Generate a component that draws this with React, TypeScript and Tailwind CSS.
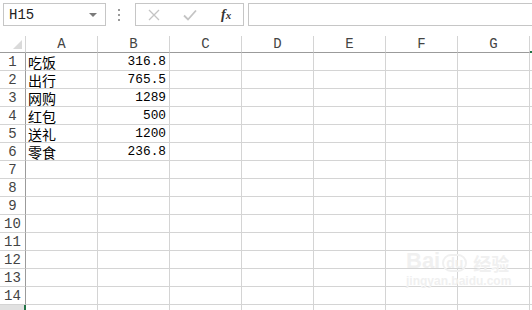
import React from "react";

// 表格数据：第 1-6 行
const DATA: [string, string][] = [
  ["吃饭", "316.8"],
  ["出行", "765.5"],
  ["网购", "1289"],
  ["红包", "500"],
  ["送礼", "1200"],
  ["零食", "236.8"],
];

const COLS = ["A", "B", "C", "D", "E", "F", "G", "H"];
const ROWS = Array.from({ length: 15 }, (_, i) => i + 1);

const mono = "font-['Liberation_Mono','DejaVu_Sans_Mono',monospace]";
const cjk = "font-['Noto_Sans_CJK_SC','Liberation_Sans',sans-serif]";

function Toolbar() {
  return (
    <div className="flex h-[36px] items-start pl-[3px] pt-[3px]">
      {/* 名称框 */}
      <div className="flex h-[23px] w-[103px] items-center justify-between border border-[#c6c6c6] pl-[5px] pr-[8px]">
        <span className={`${mono} text-[14px] text-[#222] leading-none`}>H15</span>
        <span className="h-0 w-0 border-x-[4px] border-t-[4px] border-x-transparent border-t-[#7a7a7a]" />
      </div>
      {/* 分隔点 */}
      <div className="flex h-[23px] w-[29px] flex-col items-center justify-center gap-[3px] pr-[3px]">
        <span className="h-[2px] w-[2px] bg-[#9a9a9a]" />
        <span className="h-[2px] w-[2px] bg-[#9a9a9a]" />
        <span className="h-[2px] w-[2px] bg-[#9a9a9a]" />
      </div>
      {/* 取消 / 确认 / fx */}
      <div className="flex h-[23px] w-[109px] items-center border border-[#c6c6c6]">
        <svg width="12" height="12" viewBox="0 0 12 12" className="ml-[12px]">
          <path d="M1 1 L11 11 M11 1 L1 11" stroke="#c4c4c4" strokeWidth="1.3" fill="none" />
        </svg>
        <svg width="14" height="12" viewBox="0 0 14 12" className="ml-[23px]">
          <path d="M1 6.5 L5 10.5 L13 1.5" stroke="#c4c4c4" strokeWidth="1.8" fill="none" />
        </svg>
        <span className="ml-[24px] font-['Liberation_Serif',serif] text-[14px] font-bold italic text-[#333] leading-none">
          f<span className="text-[11px]">x</span>
        </span>
      </div>
      {/* 编辑栏 */}
      <div className="ml-[4px] h-[23px] flex-1 border-y border-l border-[#c6c6c6]" />
    </div>
  );
}

export default function App() {
  return (
    <div className="relative h-[310px] w-[532px] overflow-hidden bg-white">
      <Toolbar />

      <div className="grid grid-cols-[26px_repeat(8,72px)]">
        {/* 列标题 */}
        <div className="relative h-[17px] border-b border-r border-[#9b9b9b] border-r-[#d4d4d4]">
          <span className="absolute bottom-[3px] right-[3px] h-0 w-0 border-b-[9px] border-l-[9px] border-b-[#dadada] border-l-transparent" />
        </div>
        {COLS.map((c) => (
          <div
            key={c}
            className={`flex h-[17px] items-center justify-center border-r border-[#d4d4d4] ${
              c === "H" ? "border-b-2 border-b-[#217346]" : "border-b border-b-[#9b9b9b]"
            } ${mono} text-[14px] text-[#444] leading-none`}
          >
            {c === "H" ? "" : c}
          </div>
        ))}

        {/* 行 */}
        {ROWS.map((r) => {
          const row = DATA[r - 1];
          const sel = r === 15;
          return (
            <React.Fragment key={r}>
              <div
                className={`flex h-[18px] items-center justify-center border-b border-[#d4d4d4] ${
                  sel ? "border-r-2 border-r-[#217346] bg-[#e1e1e1]" : "border-r border-r-[#9b9b9b]"
                } ${mono} text-[14px] text-[#444] leading-none`}
              >
                {sel ? "" : r}
              </div>
              {COLS.map((c, ci) => (
                <div
                  key={c}
                  className="flex h-[18px] items-center overflow-hidden border-b border-r border-[#d4d4d4] px-[2px] leading-none"
                >
                  {row && ci === 0 && (
                    <span className={`${cjk} text-[14px] leading-[14px] text-black`}>{row[0]}</span>
                  )}
                  {row && ci === 1 && (
                    <span className={`${mono} ml-auto pr-[1px] text-[12.8px] leading-[14px] text-black`}>{row[1]}</span>
                  )}
                </div>
              ))}
            </React.Fragment>
          );
        })}
      </div>

      {/* 百度经验水印 */}
      <div className="pointer-events-none absolute left-[406px] top-[250px] flex flex-col items-start text-[#f0f0f0]">
        <div className="flex items-end gap-[2px] font-['Liberation_Sans',sans-serif] text-[22px] font-bold leading-none">
          <span>Bai</span>
          <span className="rounded-full border-2 border-[#f0f0f0] px-[2px] text-[14px]">du</span>
          <span className={`${cjk} ml-[4px] text-[18px] leading-none`}>经验</span>
        </div>
        <span className="mt-[3px] font-['Liberation_Sans',sans-serif] text-[12px] font-bold leading-none">
          jingyan.baidu.com
        </span>
      </div>
    </div>
  );
}
